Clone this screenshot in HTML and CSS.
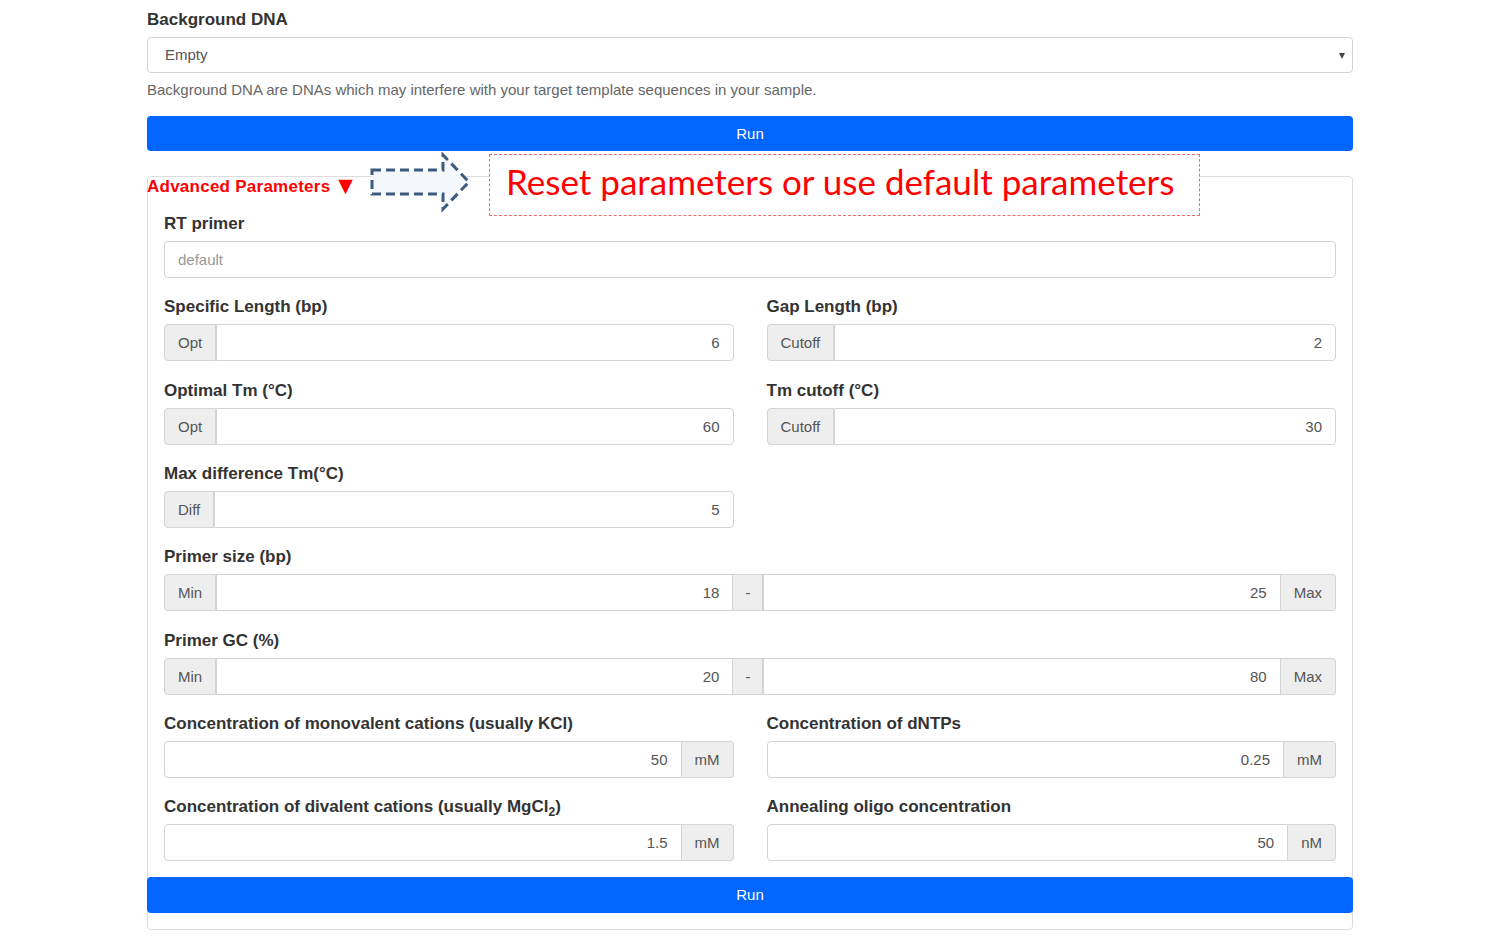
FILE: index.html
```html
<!DOCTYPE html>
<html>
<head>
<meta charset="utf-8">
<link rel="stylesheet" href="styles.css">
</head>
<body>
<div class="page">
  <div class="group-top">
    <label class="lbl">Background DNA</label>
    <div class="select"><span>Empty</span><i class="caret"></i></div>
    <p class="help">Background DNA are DNAs which may interfere with your target template sequences in your sample.</p>
  </div>
  <button class="btn-run">Run</button>

  <div class="panel">
    <div class="legend">Advanced Parameters <span class="tri">&#9660;</span></div>
    <div class="grid">
      <div class="fg full">
        <label class="lbl">RT primer</label>
        <div class="ig"><input class="fc left" placeholder="default"></div>
      </div>

      <div class="fg">
        <label class="lbl">Specific Length (bp)</label>
        <div class="ig"><span class="addon">Opt</span><input class="fc" value="6"></div>
      </div>
      <div class="fg">
        <label class="lbl">Gap Length (bp)</label>
        <div class="ig"><span class="addon">Cutoff</span><input class="fc" value="2"></div>
      </div>

      <div class="fg">
        <label class="lbl">Optimal Tm (°C)</label>
        <div class="ig"><span class="addon">Opt</span><input class="fc" value="60"></div>
      </div>
      <div class="fg">
        <label class="lbl">Tm cutoff (°C)</label>
        <div class="ig"><span class="addon">Cutoff</span><input class="fc" value="30"></div>
      </div>

      <div class="fg">
        <label class="lbl">Max difference Tm(°C)</label>
        <div class="ig"><span class="addon">Diff</span><input class="fc" value="5"></div>
      </div>
      <div class="fg"></div>

      <div class="fg full">
        <label class="lbl">Primer size (bp)</label>
        <div class="ig"><span class="addon">Min</span><input class="fc" value="18"><span class="addon dash">-</span><input class="fc" value="25"><span class="addon">Max</span></div>
      </div>

      <div class="fg full">
        <label class="lbl">Primer GC (%)</label>
        <div class="ig"><span class="addon">Min</span><input class="fc" value="20"><span class="addon dash">-</span><input class="fc" value="80"><span class="addon">Max</span></div>
      </div>

      <div class="fg">
        <label class="lbl">Concentration of monovalent cations (usually KCl)</label>
        <div class="ig"><input class="fc" value="50"><span class="addon">mM</span></div>
      </div>
      <div class="fg">
        <label class="lbl">Concentration of dNTPs</label>
        <div class="ig"><input class="fc" value="0.25"><span class="addon">mM</span></div>
      </div>

      <div class="fg">
        <label class="lbl">Concentration of divalent cations (usually MgCl<sub>2</sub>)</label>
        <div class="ig"><input class="fc" value="1.5"><span class="addon">mM</span></div>
      </div>
      <div class="fg">
        <label class="lbl">Annealing oligo concentration</label>
        <div class="ig"><input class="fc" value="50"><span class="addon">nM</span></div>
      </div>
    </div>
    <button class="btn-run in-panel">Run</button>
  </div>

  <svg class="arrow" width="106" height="62" viewBox="0 0 106 62">
    <polygon points="3,18 74,18 74,3 100,30 74,57 74,42 3,42" fill="#f4f7fb" stroke="#3d5a80" stroke-width="3" stroke-dasharray="9 5"/>
  </svg>
  <div class="note">Reset parameters or use default parameters</div>
</div>
</body>
</html>
```

FILE: styles.css
```css
* { box-sizing: border-box; }
body {
  margin: 0;
  background: #fff;
  font-family: "Liberation Sans", Arial, sans-serif;
  color: #333;
}
.page {
  position: relative;
  width: 1206px;
  margin-left: 147px;
  padding-top: 7px;
}
.lbl {
  display: block;
  font-size: 17px;
  font-weight: bold;
  line-height: 24px;
  padding-top: 1px;
  height: 25px;
  margin-bottom: 5px;
  color: #333;
  white-space: nowrap;
}
.lbl sub { font-size: 12px; line-height: 0; }
.select {
  position: relative;
  height: 36px;
  border: 1px solid #d4d4d4;
  border-radius: 4px;
  padding-left: 17px;
  font-size: 15px;
  line-height: 34px;
  color: #555;
}
.caret {
  position: absolute;
  right: 7px;
  top: 15px;
  width: 0;
  height: 0;
  border-left: 3px solid transparent;
  border-right: 3px solid transparent;
  border-top: 6px solid #444;
}
.help {
  margin: 7px 0 0;
  font-size: 15px;
  line-height: 20px;
  color: #666;
}
.btn-run {
  display: block;
  width: 100%;
  height: 35px;
  margin-top: 16px;
  border: none;
  border-radius: 4px;
  background: #0066ff;
  color: #fff;
  font-family: "Liberation Sans", Arial, sans-serif;
  font-size: 15px;
  padding: 0;
}
.panel {
  margin-top: 25px;
  border: 1px solid #ddd;
  border-radius: 4px;
  padding-bottom: 16px;
}
.legend {
  margin: 0 0 0 -1px;
  font-size: 17px;
  font-weight: bold;
  line-height: 16px;
  height: 18px;
  letter-spacing: 0.25px;
  color: #ff0000;
}
.legend .tri { font-size: 19px; font-family: "DejaVu Sans", sans-serif; margin-left: 3px; }
.grid {
  display: grid;
  grid-template-columns: 1fr 1fr;
  column-gap: 33px;
  padding: 16px 16px 0;
}
.fg { margin-bottom: 16.33px; }
.fg.full { grid-column: 1 / 3; }
.ig {
  display: flex;
  height: 37px;
}
.fc {
  flex: 1;
  min-width: 0;
  height: 37px;
  border: 1px solid #d4d4d4;
  border-radius: 0;
  padding: 0 13px;
  font-family: "Liberation Sans", Arial, sans-serif;
  font-size: 15px;
  color: #555;
  text-align: right;
  outline: none;
  background: #fff;
}
.fc.left { text-align: left; }
.fc::placeholder { color: #999; }
.addon {
  flex: none;
  display: flex;
  align-items: center;
  padding: 0 13px;
  background: #eee;
  border: 1px solid #d4d4d4;
  font-size: 15px;
  color: #555;
}
.addon.dash { padding: 0 12px; }
.ig > * + * { border-left: none; }
.ig > .addon + .fc { border-left: 1px solid #d4d4d4; }
.ig > :first-child { border-top-left-radius: 4px; border-bottom-left-radius: 4px; }
.ig > :last-child { border-top-right-radius: 4px; border-bottom-right-radius: 4px; }
.btn-run.in-panel {
  width: calc(100% + 2px);
  height: 36px;
  margin: -1px -1px 0;
}
.arrow {
  position: absolute;
  left: 222px;
  top: 152px;
}
.note {
  position: absolute;
  left: 342px;
  top: 154px;
  width: 711px;
  height: 62px;
  border: 1.5px dashed #f46a6a;
  padding-left: 16px;
  font-family: Lato, "Open Sans", sans-serif;
  font-size: 35px;
  line-height: 52px;
  color: #ff0000;
  background: #fff;
  white-space: nowrap;
}
```
